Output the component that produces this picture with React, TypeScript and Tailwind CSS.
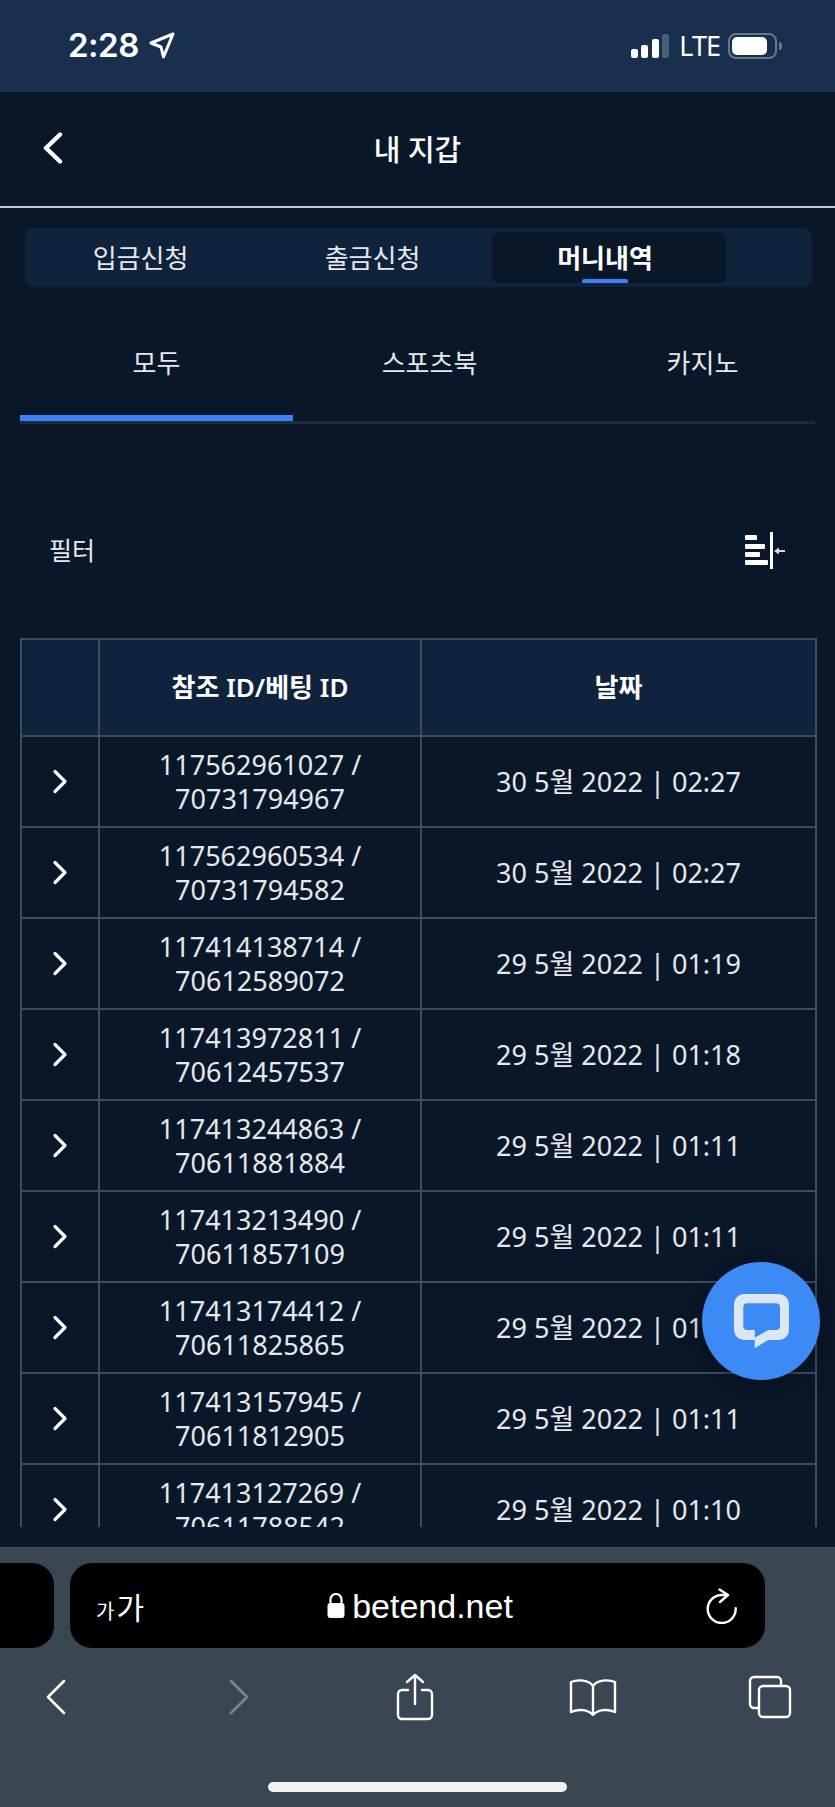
import React from 'react';

const rows = [
  ['117562961027', '70731794967', '30 5월 2022 | 02:27'],
  ['117562960534', '70731794582', '30 5월 2022 | 02:27'],
  ['117414138714', '70612589072', '29 5월 2022 | 01:19'],
  ['117413972811', '70612457537', '29 5월 2022 | 01:18'],
  ['117413244863', '70611881884', '29 5월 2022 | 01:11'],
  ['117413213490', '70611857109', '29 5월 2022 | 01:11'],
  ['117413174412', '70611825865', '29 5월 2022 | 01:11'],
  ['117413157945', '70611812905', '29 5월 2022 | 01:11'],
  ['117413127269', '70611788542', '29 5월 2022 | 01:10'],
];

const StatusBar = () => (
  <div className="h-[92px] shrink-0 bg-[#18304e] border-b border-[#223a57] flex items-center justify-between pl-[68px] pr-[53px]">
    <div className="flex items-center gap-[10px] text-white text-[33px] font-semibold font-['Inter',sans-serif] tracking-[-0.5px]">
      <span>2:28</span>
      <svg width="26" height="27" viewBox="0 0 26 27" fill="none" stroke="white" strokeWidth="3" strokeLinejoin="round">
        <path d="M24 2 L2 11 L12 15 L14.5 25 Z" />
      </svg>
    </div>
    <div className="flex items-center">
      <div className="flex items-end gap-[3.5px] h-[24px] mr-[10px]">
        <div className="w-[7px] h-[9px] rounded-[2px] bg-white" />
        <div className="w-[7px] h-[13px] rounded-[2px] bg-white" />
        <div className="w-[7px] h-[19px] rounded-[2px] bg-white" />
        <div className="w-[7px] h-[24px] rounded-[2px] bg-[#4a6078]" />
      </div>
      <span className="text-white text-[27px] tracking-[-1px] font-['Noto_Sans',sans-serif] mr-[8px] leading-none">LTE</span>
      <div className="w-[49px] h-[26px] rounded-[8px] border-2 border-[#64788e] p-[2px]">
        <div className="w-[35px] h-full rounded-[5px] bg-white" />
      </div>
      <div className="w-[3px] h-[8px] ml-[2px] rounded-r-full bg-[#64788e]" />
    </div>
  </div>
);

const FilterIcon = () => (
  <svg width="40" height="37" viewBox="0 0 40 37" fill="white">
    <rect x="0" y="3" width="12" height="5" rx="1" />
    <rect x="0" y="12" width="20" height="5" rx="1" />
    <rect x="0" y="20" width="15" height="5" rx="1" />
    <rect x="0" y="28" width="23" height="5" rx="1" />
    <rect x="25" y="0" width="3" height="37" />
    <path d="M29 19 L34 15.5 V18 H40 V20 H34 V22.5 Z" fill="#d9dde2" />
  </svg>
);

const ChatBubble = () => (
  <div className="absolute left-[702px] top-[1262px] w-[118px] h-[118px] rounded-full bg-[#3b8af5] shadow-[0_4px_24px_rgba(0,0,0,0.35)] flex items-center justify-center">
    <svg width="55" height="55" viewBox="0 0 55 55" fill="#dbe7f3">
      <path d="M20.7 46 H10 A10 10 0 0 1 0 36 V10 A10 10 0 0 1 10 0 H45 A10 10 0 0 1 55 10 V36 A10 10 0 0 1 45 46 H34 L20.7 54.3 V43.7 L34.3 36 H42 A4 4 0 0 0 46 32 V13 A4 4 0 0 0 42 9.3 H13 A4 4 0 0 0 9.3 13 V32 A4 4 0 0 0 13 36 H20.7 Z" />
    </svg>
  </div>
);

const BrowserBar = () => (
  <div className="h-[260px] shrink-0 bg-[#3a4651] border-t border-[#414e5a] relative">
    <div className="flex gap-[16px] mt-[15px] h-[85px]">
      <div className="w-[54px] h-full bg-black rounded-r-[22px]" />
      <div className="w-[695px] h-full bg-black rounded-[22px] flex items-center justify-between pl-[26px] pr-[28px] text-white">
        <div className="flex items-end gap-[2px] text-white font-['Noto_Sans_CJK_KR',sans-serif] leading-none">
          <span className="text-[20px]">가</span>
          <span className="text-[30px]">가</span>
        </div>
        <div className="flex items-center gap-[7px] mr-[10px]">
          <svg width="18" height="25" viewBox="0 0 18 25" fill="white">
            <path d="M3.5 11 V6.5 A5.5 5.5 0 0 1 14.5 6.5 V11" fill="none" stroke="white" strokeWidth="2.2" />
            <rect x="0.5" y="10" width="17" height="15" rx="3" />
          </svg>
          <span className="text-[34px] leading-none font-['Liberation_Sans',sans-serif]">betend.net</span>
        </div>
        <svg width="31" height="36" viewBox="0 0 31 36" fill="none" stroke="white" strokeWidth="2.4" strokeLinecap="round" strokeLinejoin="round">
          <path d="M20 7 H15.7 A14 14 0 1 0 29.7 20.3" />
          <path d="M13.5 1.5 L22 7 L14 14" />
        </svg>
      </div>
    </div>
    <div className="flex items-center pl-[46px] mt-[24px] h-[50px]">
      <svg width="20" height="36" viewBox="0 0 20 36" fill="none" stroke="white" strokeWidth="2.6" strokeLinecap="round" strokeLinejoin="round">
        <path d="M18 2 L2 18 L18 34" />
      </svg>
      <svg className="ml-[163px]" width="20" height="36" viewBox="0 0 20 36" fill="none" stroke="#7d868f" strokeWidth="2.6" strokeLinecap="round" strokeLinejoin="round">
        <path d="M2 2 L18 18 L2 34" />
      </svg>
      <svg className="ml-[147px]" width="38" height="48" viewBox="0 0 38 48" fill="none" stroke="white" strokeWidth="2.4" strokeLinecap="round" strokeLinejoin="round">
        <path d="M19 2 V31 M11 9 L19 2 L27 9" />
        <path d="M12 17 H6 A4 4 0 0 0 2 21 V42 A4 4 0 0 0 6 46 H32 A4 4 0 0 0 36 42 V21 A4 4 0 0 0 32 17 H26" />
      </svg>
      <svg className="ml-[135px]" width="48" height="38" viewBox="0 0 48 38" fill="none" stroke="white" strokeWidth="2.4" strokeLinejoin="round">
        <path d="M24 8 C20 2 9 1 2 4 V34 C9 31 19 31 24 37 C29 31 39 31 46 34 V4 C39 1 28 2 24 8 Z M24 8 V37" />
      </svg>
      <svg className="ml-[131px]" width="44" height="44" viewBox="0 0 44 44" fill="none" stroke="white" strokeWidth="2.4" strokeLinejoin="round">
        <path d="M33 10 V6 A4 4 0 0 0 29 2 H6 A4 4 0 0 0 2 6 V29 A4 4 0 0 0 6 33 H10" />
        <rect x="11" y="11" width="31" height="31" rx="4" />
      </svg>
    </div>
    <div className="absolute left-[268px] top-[234px] w-[299px] h-[10px] rounded-full bg-[#f2f2f2]" />
  </div>
);

export default function App() {
  return (
    <div className="relative w-[835px] h-[1807px] overflow-hidden flex flex-col bg-[#0a1728] text-white font-['Noto_Sans','Noto_Sans_CJK_KR',sans-serif]">
      <StatusBar />

      <div className="h-[116px] shrink-0 border-b-2 border-[#c4c6c9] flex items-center justify-center relative">
        <svg className="absolute left-[43px] top-[40px]" width="20" height="32" viewBox="0 0 20 32" fill="none" stroke="white" strokeWidth="4.4" strokeLinecap="round" strokeLinejoin="round">
          <path d="M17 2.5 L3 16 L17 29.5" />
        </svg>
        <h1 className="text-[29px] font-medium leading-none">내 지갑</h1>
      </div>

      <div className="h-[59px] mt-[20px] ml-[25px] w-[787px] shrink-0 rounded-[8px] bg-[#10233d] flex items-center text-[26px] leading-none">
        <div className="w-[231px] text-center text-[#e6e8eb]">입금신청</div>
        <div className="w-[233px] text-center text-[#e6e8eb]">출금신청</div>
        <div className="relative w-[234px] h-[51px] ml-[3px] rounded-[8px] bg-[#0a1728] flex items-center justify-center pr-[8px] font-semibold">
          머니내역
          <div className="absolute left-[90px] bottom-0 w-[46px] h-[4px] rounded-t-[2px] bg-[#3b82f6]" />
        </div>
      </div>

      <div className="h-[137px] mx-[20px] shrink-0 overflow-hidden border-b-[3px] border-[#1c2a3c]">
        <div className="flex h-[134px] w-[819px] text-[26px] leading-none text-[#e6e8eb]">
          <div className="w-[273px] h-full flex items-center justify-center pt-[24px] border-b-[6px] border-[#3b82f6]">모두</div>
          <div className="w-[273px] h-full flex items-center justify-center pt-[18px]">스포츠북</div>
          <div className="w-[273px] h-full flex items-center justify-center pt-[18px]">카지노</div>
        </div>
      </div>

      <div className="h-[214px] shrink-0 flex items-center justify-between pl-[49px] pr-[50px] pt-[38px]">
        <span className="text-[25px] text-[#e6e8eb] leading-none">필터</span>
        <FilterIcon />
      </div>

      <div className="flex-1 min-h-0 overflow-hidden">
        <div className="ml-[19px] w-[798px] px-[1px] h-[889px] overflow-hidden">
          <table className="w-[795px] table-fixed border-collapse text-center">
            <colgroup>
              <col className="w-[78px]" />
              <col className="w-[322px]" />
              <col className="w-[395px]" />
            </colgroup>
            <thead>
              <tr className="h-[97px] bg-[#10233d] text-[26px]">
                <th className="border-2 border-[#3c4c61]" />
                <th className="border-2 border-[#3c4c61] font-semibold">참조 ID/베팅 ID</th>
                <th className="border-2 border-[#3c4c61] font-semibold">날짜</th>
              </tr>
            </thead>
            <tbody>
              {rows.map((row) => (
                <tr key={row[0]} className="h-[91px] text-[27px] leading-[34px] text-[#e6e8eb]">
                  <td className="border-2 border-[#3c4c61]">
                    <svg className="mx-auto" width="16" height="25" viewBox="0 0 16 25" fill="none" stroke="white" strokeWidth="3.2" strokeLinecap="round" strokeLinejoin="round">
                      <path d="M3 2.5 L13 12.5 L3 22.5" />
                    </svg>
                  </td>
                  <td className="border-2 border-[#3c4c61]">
                    {row[0]} /<br />
                    {row[1]}
                  </td>
                  <td className="border-2 border-[#3c4c61]">{row[2]}</td>
                </tr>
              ))}
            </tbody>
          </table>
        </div>
      </div>

      <BrowserBar />
      <ChatBubble />
    </div>
  );
}
